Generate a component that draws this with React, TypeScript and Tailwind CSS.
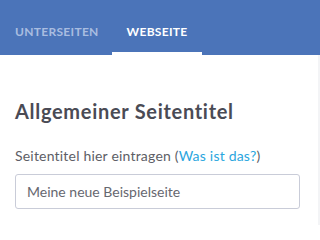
import React from "react";

export default function App() {
  return (
    <div className="w-[320px] h-[225px] bg-white flex flex-col overflow-hidden" style={{ fontFamily: "Lato, 'Open Sans', sans-serif" }}>
      <div className="h-[55px] bg-[#4b74b9] flex items-end">
        <div className="flex h-full">
          <div className="flex flex-col w-[112px]">
            <div className="flex-1 flex items-center pl-[15px] pt-[11px] text-[12px] font-bold tracking-[0.3px] text-[#a9bde0]">UNTERSEITEN</div>
            <div className="h-[3px]" />
          </div>
          <div className="flex flex-col w-[90px]">
            <div className="flex-1 flex items-center justify-center pt-[11px] text-[12px] font-bold tracking-[0.3px] text-white">WEBSEITE</div>
            <div className="h-[3px] bg-white" />
          </div>
        </div>
      </div>
      <div className="flex flex-1">
        <div className="flex-1 flex flex-col px-[15px]">
          <h1 className="mt-[44px] text-[20px] font-bold leading-[24px] tracking-[0.7px] text-[#4a4b55]">Allgemeiner Seitentitel</h1>
          <p className="mt-[24px] text-[14px] leading-[18px] tracking-[0.2px] text-[#5d5e66]">
            Seitentitel hier eintragen (<span className="text-[#2aa6de]">Was ist das?</span>)
          </p>
          <div className="mt-[9px] w-[285px] h-[35px] border border-[#c9ccd8] rounded-[3px] flex items-center px-[11px] text-[14px] text-[#66676f]">
            Meine neue Beispielseite
          </div>
        </div>
        <div className="w-[2px] bg-[#f3f4f6]" />
      </div>
    </div>
  );
}
